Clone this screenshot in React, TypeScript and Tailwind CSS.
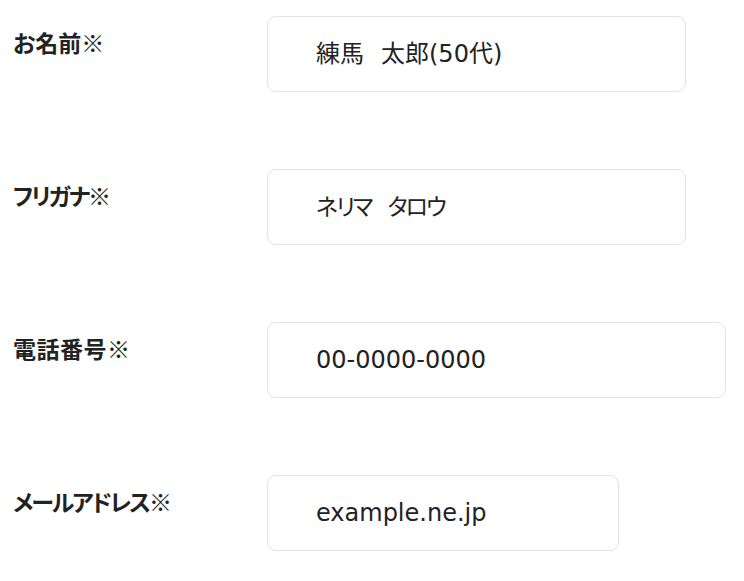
const rows = [
  { label: 'お名前※', labelCls: '', value: ['練馬', '太郎(50代)'], valueCls: 'text-[24px]', width: 'w-[419px]' },
  { label: 'フリガナ※', labelCls: 'tracking-[-2px]', value: ['ネリマ', 'タロウ'], valueCls: 'text-[23px] tracking-[-2px]', width: 'w-[419px]' },
  { label: '電話番号※', labelCls: 'tracking-[0.5px]', value: ['00-0000-0000'], valueCls: 'text-[24px]', width: 'w-[459px]' },
  { label: 'メールアドレス※', labelCls: 'tracking-[-2px]', value: ['example.ne.jp'], valueCls: 'text-[24px]', width: 'w-[352px]' },
];

export default function App() {
  return (
    <div className="min-h-screen bg-white pt-[16px] pl-[13px] text-[#222222]">
      {rows.map((row, i) => (
        <div key={i} className="flex mb-[77px]">
          <div
            className={`w-[254px] shrink-0 pt-[10px] text-[23px] leading-[32px] font-bold font-['Noto_Sans_CJK_JP',sans-serif] [font-feature-settings:'palt'] ${row.labelCls}`}
          >
            {row.label}
          </div>
          <div
            className={`${row.width} h-[76px] flex items-center rounded-[9px] border border-[#e2e2e8] pl-[48px] font-['DejaVu_Sans','Noto_Sans_CJK_JP',sans-serif] [font-feature-settings:'palt'] ${row.valueCls}`}
          >
            {row.value.map((part, j) => (
              <span key={j}>
                {j > 0 && <span className="tracking-[-7px]">　</span>}
                {part}
              </span>
            ))}
          </div>
        </div>
      ))}
    </div>
  );
}
